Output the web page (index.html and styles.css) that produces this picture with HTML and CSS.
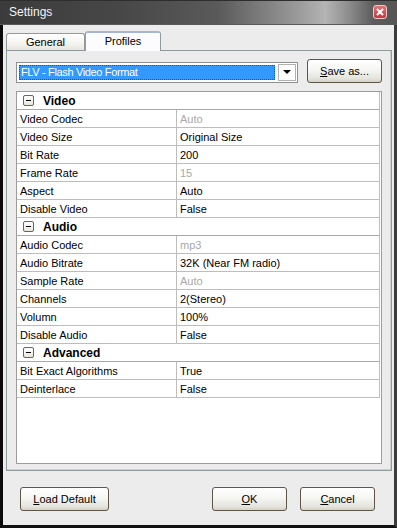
FILE: index.html
```html
<!DOCTYPE html>
<html lang="en">
<head>
  <meta charset="UTF-8">
  <title>Settings</title>
  <link rel="stylesheet" href="styles.css">
</head>
<body>
<div class="window">
  <div class="titlebar">
    <span class="title">Settings</span>
    <span class="close-btn">
      <svg width="8" height="8" viewBox="0 0 8 8"><path d="M1 1 L7 7 M7 1 L1 7" stroke="#fff" stroke-width="2"/></svg>
    </span>
  </div>

  <div class="frame">
    <div class="tabs">
      <div class="tab">General</div>
      <div class="tab active">Profiles</div>
    </div>

    <div class="panel">
      <div class="toolbar">
        <div class="combo">
          <div class="combo-value">FLV - Flash Video Format</div>
          <div class="combo-arrow"><span class="triangle"></span></div>
        </div>
        <button class="btn save-btn"><u>S</u>ave as...</button>
      </div>

      <div class="grid">
        <div class="row category"><span class="toggle"></span>Video</div>
        <div class="row"><span class="label">Video Codec</span><span class="value disabled">Auto</span></div>
        <div class="row"><span class="label">Video Size</span><span class="value">Original Size</span></div>
        <div class="row"><span class="label">Bit Rate</span><span class="value">200</span></div>
        <div class="row"><span class="label">Frame Rate</span><span class="value disabled">15</span></div>
        <div class="row"><span class="label">Aspect</span><span class="value">Auto</span></div>
        <div class="row"><span class="label">Disable Video</span><span class="value">False</span></div>

        <div class="row category"><span class="toggle"></span>Audio</div>
        <div class="row"><span class="label">Audio Codec</span><span class="value disabled">mp3</span></div>
        <div class="row"><span class="label">Audio Bitrate</span><span class="value">32K (Near FM radio)</span></div>
        <div class="row"><span class="label">Sample Rate</span><span class="value disabled">Auto</span></div>
        <div class="row"><span class="label">Channels</span><span class="value">2(Stereo)</span></div>
        <div class="row"><span class="label">Volumn</span><span class="value">100%</span></div>
        <div class="row"><span class="label">Disable Audio</span><span class="value">False</span></div>

        <div class="row category"><span class="toggle"></span>Advanced</div>
        <div class="row"><span class="label">Bit Exact Algorithms</span><span class="value">True</span></div>
        <div class="row"><span class="label">Deinterlace</span><span class="value">False</span></div>
      </div>
    </div>

    <div class="footer">
      <button class="btn load-btn"><u>L</u>oad Default</button>
      <div class="footer-right">
        <button class="btn"><u>O</u>K</button>
        <button class="btn"><u>C</u>ancel</button>
      </div>
    </div>
  </div>
</div>
</body>
</html>
```

FILE: styles.css
```css
body {
  margin: 0;
  font-family: "Liberation Sans", Arial, sans-serif;
  font-size: 11px;
  color: #000;
  background: #ececec;
}
.window {
  width: 397px;
  height: 528px;
  overflow: hidden;
}
.titlebar {
  height: 25px;
  box-sizing: border-box;
  display: flex;
  align-items: center;
  justify-content: space-between;
  padding: 0 10px 1px 9px;
  background: linear-gradient(to right, #3b3b3b 0%, #474747 30%, #5a5a5a 55%, #9a9a9a 75%, #b4b4b4 82%, #8c8c8c 88%, #5c5c5c 94%, #555 100%);
  border-top: 1px solid #2e2e2e;
  border-bottom: 1px solid #5a5a5a;
}
.title {
  color: #f4f4f4;
  font-size: 12px;
}
.close-btn {
  width: 14px;
  height: 14px;
  box-sizing: border-box;
  border: 1px solid #f0c8c8;
  border-radius: 3px;
  background: linear-gradient(#e0757a, #c2393f);
  display: flex;
  align-items: center;
  justify-content: center;
}
.frame {
  height: 503px;
  box-sizing: border-box;
  border-left: 3px solid #0a0a0a;
  border-right: 3px solid #3c3c3c;
  border-bottom: 3px solid #111;
  background: #ececec;
  display: flex;
  flex-direction: column;
}
.tabs {
  display: flex;
  align-items: flex-end;
  height: 19px;
  margin-top: 6px;
  padding-left: 3px;
  position: relative;
  z-index: 1;
}
.tab {
  width: 79px;
  height: 17px;
  box-sizing: border-box;
  border: 1px solid #919b9c;
  border-bottom: none;
  border-radius: 3px 3px 0 0;
  background: linear-gradient(#ffffff, #f4f3ee 60%, #e6e5de);
  text-align: center;
  line-height: 16px;
}
.tab.active {
  width: 76px;
  height: 20px;
  margin-bottom: -1px;
  background: #fcfcfe;
  border-top: 2px solid #a6b6d2;
  line-height: 17px;
}
.panel {
  height: 421px;
  box-sizing: border-box;
  margin: 0 2px 0 3px;
  border: 1px solid #919b9c;
  background: #ececec;
  padding: 8px 9px 6px 9px;
  box-shadow: inset -1px -1px 0 #d0d0cc;
}
.toolbar {
  display: flex;
  align-items: center;
  justify-content: space-between;
  height: 24px;
}
.combo {
  width: 282px;
  height: 21px;
  box-sizing: border-box;
  border: 1px solid #8e8f8f;
  background: #fff;
  display: flex;
  align-items: stretch;
  padding: 2px 1px 2px 2px;
  margin-top: 2px;
}
.combo-value {
  flex: 1;
  background: #3399ff;
  color: #fff;
  outline: 1px dotted #6a4a00;
  outline-offset: -1px;
  line-height: 15px;
  padding-left: 2px;
  letter-spacing: -0.35px;
}
.combo-arrow {
  width: 16px;
  margin-left: 3px;
  border: 1px solid #b0b0b0;
  display: flex;
  align-items: center;
  justify-content: center;
  margin-top: -1px;
  margin-bottom: -1px;
}
.triangle {
  width: 0;
  height: 0;
  border-left: 4px solid transparent;
  border-right: 4px solid transparent;
  border-top: 4px solid #000;
}
.btn {
  font-family: "Liberation Sans", Arial, sans-serif;
  font-size: 11px;
  color: #000;
  height: 24px;
  box-sizing: border-box;
  border: 1px solid #5e5646;
  border-radius: 3px;
  background: linear-gradient(#ffffff, #f6f6f3 45%, #e4e3dc 85%, #d3d1c8);
  padding: 0;
  width: 75px;
}
.grid {
  margin-top: 8px;
  width: 366px;
  height: 373px;
  box-sizing: border-box;
  border: 1px solid #9c9c9c;
  background: #fff;
}
.row {
  display: grid;
  grid-template-columns: 160px 1fr;
  height: 18px;
  box-sizing: border-box;
  margin-right: 1px;
  border-bottom: 1px solid #bdbdbd;
  border-right: 1px solid #bdbdbd;
  line-height: 18px;
  white-space: nowrap;
}
.label {
  padding-left: 3px;
  border-right: 1px solid #bdbdbd;
}
.value {
  padding-left: 3px;
}
.disabled {
  color: #a8a8a8;
}
.row.category {
  display: flex;
  align-items: center;
  padding-left: 6px;
  font-weight: bold;
  font-size: 12px;
  border-bottom-color: #a9a9a9;
}
.toggle {
  width: 11px;
  height: 11px;
  box-sizing: border-box;
  border: 1px solid #6b6656;
  border-radius: 2px;
  background: linear-gradient(#ffffff, #e8e6dc);
  margin-right: 9px;
  display: flex;
  align-items: center;
  justify-content: center;
}
.toggle::before {
  content: "";
  width: 5px;
  height: 1px;
  background: #000;
}
.footer {
  display: flex;
  justify-content: space-between;
  margin-top: 16px;
  padding: 0 19px 0 17px;
}
.load-btn {
  width: 89px;
}
.footer-right {
  display: flex;
  gap: 13px;
}
```
